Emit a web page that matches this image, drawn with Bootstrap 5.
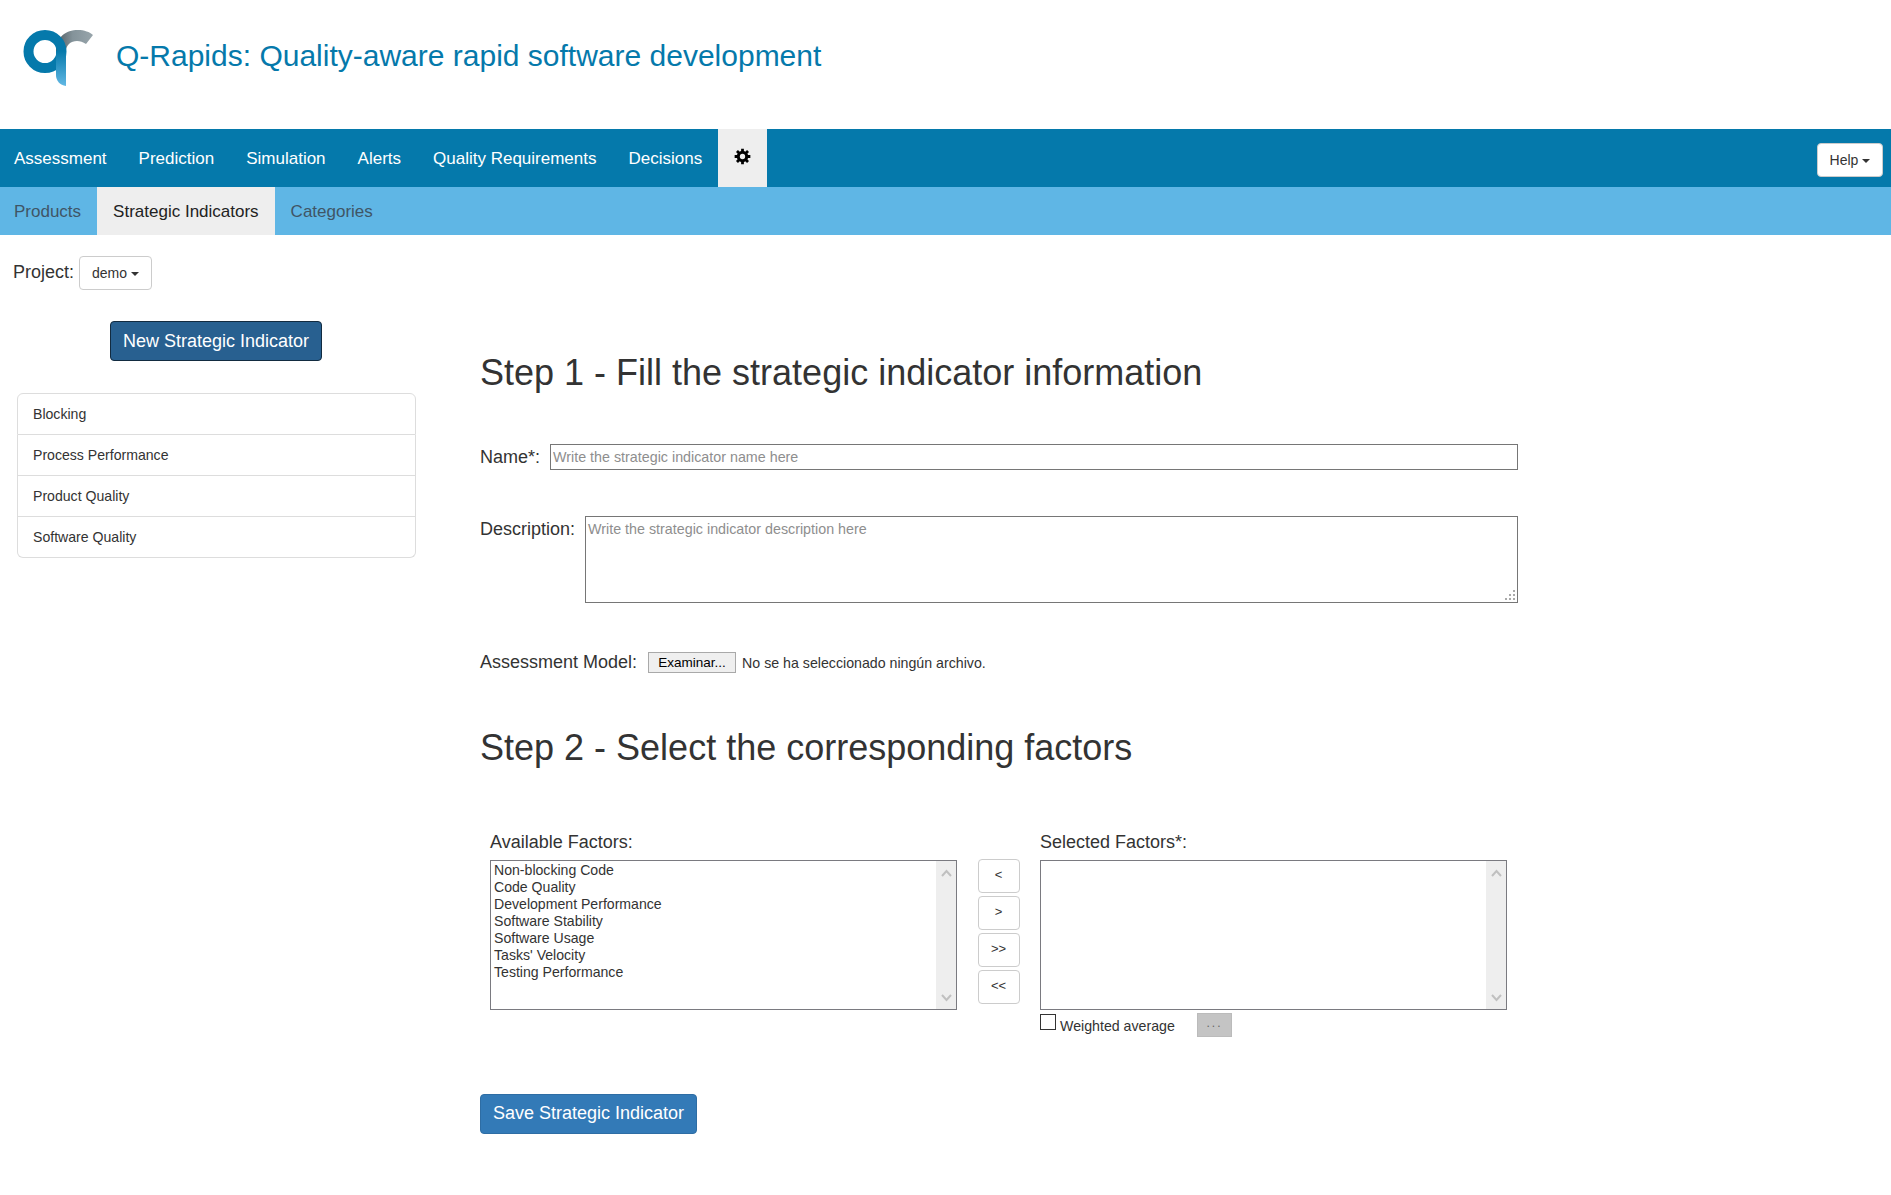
<!DOCTYPE html>
<html lang="en">
<head>
    <meta charset="UTF-8">
    <meta name="viewport" content="width=device-width, initial-scale=1.0">
    <link href="https://cdn.jsdelivr.net/npm/bootstrap@5.3.7/dist/css/bootstrap.min.css" rel="stylesheet">
    <script src="https://cdn.jsdelivr.net/npm/bootstrap@5.3.7/dist/js/bootstrap.bundle.min.js"></script>
    <title>Q-Rapids</title>
    <style>
        body { font-family: "Liberation Sans", Arial, sans-serif; color: #333; font-size: 14px; line-height: 1.42857; }

        .top-head { height: 129px; padding: 0 0 10px 20px; }
        .top-head svg { margin-right: 20px; }
        .top-head h1 { font-size: 30px; font-weight: 400; color: #0579ab; margin: 0; line-height: 1.1; position: relative; top: -4px; }

        .main-bar { background: #0579ab; height: 58px; }
        .main-bar .nav-link { color: #fff; font-size: 17px; padding: 0 16px; height: 58px; line-height: 60px; }
        .main-bar .nav-item:first-child .nav-link { padding-left: 14px; }
        .main-bar .nav-link.gear-tab { background: #eee; width: 49px; padding: 0 0 3px; display: flex; align-items: center; justify-content: center; }
        .help-btn { margin: 14px 8px 0 0; height: 34px; width: 66px; padding: 2px 0 0; font-size: 14px; color: #333; background: #fff; border: 1px solid #ccc; border-radius: 4px; }
        .sub-bar { background: #5fb6e5; height: 48px; }
        .sub-bar .nav-link { color: #3f5566; font-size: 17px; padding: 0 16px; height: 48px; line-height: 50px; }
        .sub-bar .nav-item:first-child .nav-link { padding-left: 14px; }
        .sub-bar .nav-link.active { background: #eee; color: #222; }

        .plain-toggle { font-size: 14px; color: #333; background: #fff; border: 1px solid #ccc; border-radius: 4px; padding: 2px 0 0; height: 34px; width: 73px; }
        .plain-toggle::after, .help-btn::after { border-top-width: 4px; border-right-width: 4px; border-left-width: 4px; margin-left: 4px; vertical-align: 2px; }

        .project-row { padding: 21px 0 0 13px; height: 86px; align-items: flex-start; }
        .project-row label { font-size: 18px; margin-right: 5px; line-height: 34px; margin-top: -1px; }

        .side-col { width: 480px; flex: none; padding-left: 17px; }
        .side-inner { width: 399px; }
        .new-btn { display: block; width: 212px; height: 40px; margin: 0 auto 32px 93px; padding: 1px 0 0; font-size: 18px; color: #fff; background: #286090; border: 1px solid #122b40; border-radius: 4px; }
        .si-list .list-group-item { font-size: 14.1px; padding: 10px 15px; height: 41px; color: #333; border-color: #ddd; line-height: 20px; }
        .si-list .list-group-item:first-child { height: 42px; }

        .form-col { width: 1038px; padding-top: 32px; }
        .form-col h2 { font-size: 36px; font-weight: 400; line-height: 40px; margin: 0; color: #333; }
        .form-col label { font-size: 18px; margin: 0; }
        .name-row { margin-top: 51px; }
        .desc-row { margin-top: 46px; }
        .file-row { margin-top: 47px; }
        .form-col h2.step-two { margin-top: 52px; }
        .factors-row { margin-top: 56px; padding-left: 10px; }
        .plain-input, .plain-area { border: 1px solid #767676; font-size: 14.3px; padding: 1px 2px; border-radius: 0; color: #333; font-family: inherit; }
        .plain-input { height: 26px; }
        /* dotted grip like the reference, drawn with small gradient squares */
        .plain-area {
            height: 87px; display: block; padding-top: 2px; resize: none;
            background-image: linear-gradient(#aaa, #aaa), linear-gradient(#aaa, #aaa), linear-gradient(#aaa, #aaa), linear-gradient(#aaa, #aaa), linear-gradient(#aaa, #aaa), linear-gradient(#aaa, #aaa);
            background-size: 2px 2px;
            background-repeat: no-repeat;
            background-position: right 2px bottom 2px, right 6px bottom 2px, right 10px bottom 2px, right 2px bottom 6px, right 6px bottom 6px, right 2px bottom 10px;
        }
        .plain-input::placeholder, .plain-area::placeholder { color: #8e8e8e; }
        .name-row label { margin-right: 10px; line-height: 26px; }
        .desc-row label { margin-right: 10px; line-height: 26px; }
        .file-row label { margin-right: 11px; }
        .file-btn { width: 88px; height: 21px; padding: 0; font-size: 13.5px; line-height: 19px; color: #000; background: #efefef; border: 1px solid #a9a9a9; border-radius: 0; }
        .file-name { font-size: 14.2px; margin-left: 6px; color: #333; }

        .factor-col { width: 467px; flex: none; }
        .factor-col > label { display: block; line-height: 20px; margin-top: 8px; margin-bottom: 8px; }
        .factor-box { height: 150px; border: 1px solid #7a7a80; }
        .factor-box select { border: 0; outline: 0; overflow: hidden; font-size: 14.1px; padding: 1px; color: #333; background: #fff; font-family: inherit; }
        .factor-box option { line-height: 17px; min-height: 17px; padding: 0 2px; }
        .fake-scroll { width: 20px; flex: none; background: #eee; padding: 8px 0 7px; }
        .move-col { width: 83px; flex: none; padding-top: 35px; gap: 3px; }
        .move-btn { width: 42px; height: 34px; padding: 0; font-size: 13px; color: #333; background: #fff; border: 1px solid #ccc; border-radius: 4px; }
        .weight-row { margin-top: 3px; height: 24px; }
        .form-check-input.weight-check[type=checkbox] { width: 16px; height: 16px; margin: 1px 4px 0 0; border: 1px solid #333; border-radius: 0; flex: none; }
        .weight-row span { font-size: 14.2px; width: 137px; margin-top: 3px; }
        .dots-btn { width: 35px; height: 24px; padding: 0 0 4px; font-size: 12px; letter-spacing: 2px; line-height: 1; color: #666; background: #c4c4c4; border: 1px solid #bbb; border-radius: 0; }
        .save-btn { display: block; width: 217px; height: 40px; margin-top: 57px; padding: 0; font-size: 18px; color: #fff; background: #337ab7; border: 1px solid #2e6da4; border-radius: 4px; }
    </style>
</head>
<body>
    <header class="top-head d-flex align-items-center">
        <svg width="76" height="70" viewBox="20 24 76 70" aria-label="Q-Rapids logo">
            <defs>
                <linearGradient id="arcGrad" x1="0" y1="0" x2="1" y2="0">
                    <stop offset="0" stop-color="#4f5a60"/>
                    <stop offset="0.45" stop-color="#84939a"/>
                    <stop offset="1" stop-color="#98a5ab"/>
                </linearGradient>
                <linearGradient id="stemGrad" x1="0" y1="0" x2="0" y2="1">
                    <stop offset="0" stop-color="#0579ab"/>
                    <stop offset="1" stop-color="#62b8e4"/>
                </linearGradient>
            </defs>
            <path d="M56 50C56 36 66 29 78 29C84 29 90 31 93 34L86 43C83 41 80 40 77 40C71 40 66 44 66 50Z" fill="url(#arcGrad)"/>
            <circle cx="45" cy="50.5" r="16.5" fill="none" stroke="#0579ab" stroke-width="10"/>
            <path d="M56 50H66V85C60 84 56 80 56 74Z" fill="url(#stemGrad)"/>
        </svg>
        <h1>Q-Rapids: Quality-aware rapid software development</h1>
    </header>

    <nav class="main-bar d-flex justify-content-between">
        <ul class="nav">
            <li class="nav-item"><a class="nav-link" href="#">Assessment</a></li>
            <li class="nav-item"><a class="nav-link" href="#">Prediction</a></li>
            <li class="nav-item"><a class="nav-link" href="#">Simulation</a></li>
            <li class="nav-item"><a class="nav-link" href="#">Alerts</a></li>
            <li class="nav-item"><a class="nav-link" href="#">Quality Requirements</a></li>
            <li class="nav-item"><a class="nav-link" href="#">Decisions</a></li>
            <li class="nav-item">
                <a class="nav-link gear-tab" href="#">
                    <svg width="17" height="17" viewBox="0 0 16 16" aria-label="Settings">
                        <g stroke="#000" stroke-width="2.6">
                            <path d="M8 .6V15.4M.6 8H15.4M2.8 2.8L13.2 13.2M13.2 2.8L2.8 13.2"/>
                        </g>
                        <circle cx="8" cy="8" r="5.4" fill="#000"/>
                        <circle cx="8" cy="8" r="2.5" fill="#eee"/>
                    </svg>
                </a>
            </li>
        </ul>
        <div class="dropdown">
            <button class="help-btn dropdown-toggle" data-bs-toggle="dropdown">Help</button>
        </div>
    </nav>

    <nav class="sub-bar">
        <ul class="nav">
            <li class="nav-item"><a class="nav-link" href="#">Products</a></li>
            <li class="nav-item"><a class="nav-link active" href="#">Strategic Indicators</a></li>
            <li class="nav-item"><a class="nav-link" href="#">Categories</a></li>
        </ul>
    </nav>

    <div class="project-row d-flex">
        <label>Project:</label>
        <button class="plain-toggle dropdown-toggle" data-bs-toggle="dropdown">demo</button>
    </div>

    <div class="d-flex">
        <aside class="side-col">
            <div class="side-inner">
                <button class="new-btn">New Strategic Indicator</button>
                <div class="list-group si-list">
                    <a class="list-group-item" href="#">Blocking</a>
                    <a class="list-group-item" href="#">Process Performance</a>
                    <a class="list-group-item" href="#">Product Quality</a>
                    <a class="list-group-item" href="#">Software Quality</a>
                </div>
            </div>
        </aside>

        <main class="form-col">
            <h2>Step 1 - Fill the strategic indicator information</h2>

            <div class="name-row d-flex">
                <label for="siName">Name*:</label>
                <input id="siName" type="text" class="plain-input flex-grow-1" placeholder="Write the strategic indicator name here">
            </div>

            <div class="desc-row d-flex">
                <label for="siDesc">Description:</label>
                <textarea id="siDesc" class="plain-area flex-grow-1" placeholder="Write the strategic indicator description here"></textarea>
            </div>

            <div class="file-row d-flex align-items-center">
                <label>Assessment Model:</label>
                <button class="file-btn">Examinar...</button>
                <span class="file-name">No se ha seleccionado ningún archivo.</span>
            </div>

            <h2 class="step-two">Step 2 - Select the corresponding factors</h2>

            <div class="factors-row d-flex">
                <div class="factor-col">
                    <label>Available Factors:</label>
                    <div class="factor-box d-flex">
                        <select multiple class="flex-grow-1">
                            <option>Non-blocking Code</option>
                            <option>Code Quality</option>
                            <option>Development Performance</option>
                            <option>Software Stability</option>
                            <option>Software Usage</option>
                            <option>Tasks' Velocity</option>
                            <option>Testing Performance</option>
                        </select>
                        <div class="fake-scroll d-flex flex-column justify-content-between align-items-center">
                            <svg width="11" height="8" viewBox="0 0 11 8"><path d="M1 7L5.5 2L10 7" fill="none" stroke="#c0c0c0" stroke-width="2"/></svg>
                            <svg width="11" height="8" viewBox="0 0 11 8"><path d="M1 1L5.5 6L10 1" fill="none" stroke="#c0c0c0" stroke-width="2"/></svg>
                        </div>
                    </div>
                </div>

                <div class="move-col d-flex flex-column align-items-center">
                    <button class="move-btn">&lt;</button>
                    <button class="move-btn">&gt;</button>
                    <button class="move-btn">&gt;&gt;</button>
                    <button class="move-btn">&lt;&lt;</button>
                </div>

                <div class="factor-col">
                    <label>Selected Factors*:</label>
                    <div class="factor-box d-flex">
                        <select multiple class="flex-grow-1"></select>
                        <div class="fake-scroll d-flex flex-column justify-content-between align-items-center">
                            <svg width="11" height="8" viewBox="0 0 11 8"><path d="M1 7L5.5 2L10 7" fill="none" stroke="#c0c0c0" stroke-width="2"/></svg>
                            <svg width="11" height="8" viewBox="0 0 11 8"><path d="M1 1L5.5 6L10 1" fill="none" stroke="#c0c0c0" stroke-width="2"/></svg>
                        </div>
                    </div>
                    <div class="weight-row d-flex align-items-start">
                        <input type="checkbox" class="form-check-input weight-check">
                        <span>Weighted average</span>
                        <button class="dots-btn">...</button>
                    </div>
                </div>
            </div>

            <button class="save-btn">Save Strategic Indicator</button>
        </main>
    </div>
</body>
</html>
